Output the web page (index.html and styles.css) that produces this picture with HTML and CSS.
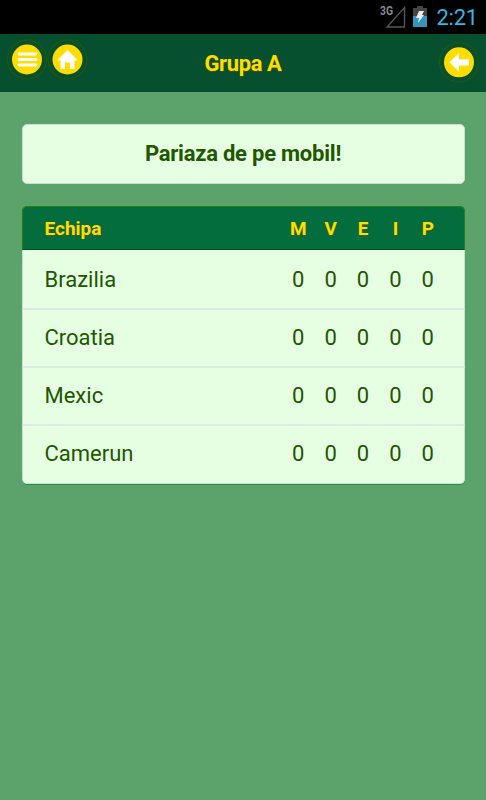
FILE: index.html
```html
<!doctype html>
<html lang="ro">
	<head>
		<meta charset="utf-8" />
		<meta name="viewport" content="width=device-width, initial-scale=1.0" />
		<title>Grupa A</title>
		<link rel="stylesheet" href="styles.css">
	</head>
	<body>
		<div class="status_bar">
			<svg class="signal" width="28" height="24" viewBox="0 0 28 24">
				<text class="signal_label" x="0" y="10" textLength="13" lengthAdjust="spacingAndGlyphs">3G</text>
				<path d="M24.500 2.500V22H7z" fill="none" stroke="#555" stroke-width="1.4" />
			</svg>
			<svg class="battery" width="14" height="21" viewBox="0 0 14 21">
				<path d="M0 2h4V0h6v2h4v8H0z" fill="#444" />
				<path d="M0 10h14v11H0z" fill="#3595bd" />
				<path d="M6 5h5L9 9h2l-6 8 1-5H3z" fill="#eee" />
			</svg>
			<span class="clock">2:21</span>
		</div>
		<header class="header">
			<a class="button" href="#">
				<svg width="42" height="42" viewBox="0 -0.5 42 42">
					<circle class="ring" cx="21" cy="21" r="19.5" />
					<circle class="disc" cx="21" cy="21" r="15" />
					<path class="bars" d="M13 15.5h17M13 21h17M13 26.5h17" />
				</svg>
			</a>
			<a class="button" href="#">
				<svg width="42" height="42" viewBox="0.5 -0.5 42 42">
					<circle class="ring" cx="21" cy="21" r="19.5" />
					<circle class="disc" cx="21" cy="21" r="15" />
					<path class="glyph" d="M21 11.500L30.500 21v1H28v8.500h-4.500V24h-5v6.500H14V22h-2.500v-1z" />
				</svg>
			</a>
			<h1 class="title">Grupa A</h1>
			<a class="button back" href="#">
				<svg width="42" height="42" viewBox="0 -0.3 42 42">
					<circle class="ring" cx="21" cy="21" r="19.5" />
					<circle class="disc" cx="21" cy="21" r="15" />
					<path class="glyph" d="M11.500 21L21 11.700V18h10v6.300H21v6z" />
				</svg>
			</a>
		</header>
		<article class="content">
			<a class="banner" href="#">Pariaza de pe mobil!</a>
			<section class="group">
				<div class="row head">
					<span class="team">Echipa</span>
					<span>M</span><span>V</span><span>E</span><span>I</span><span>P</span>
				</div>
				<div class="row">
					<span class="team">Brazilia</span>
					<span>0</span><span>0</span><span>0</span><span>0</span><span>0</span>
				</div>
				<div class="row">
					<span class="team">Croatia</span>
					<span>0</span><span>0</span><span>0</span><span>0</span><span>0</span>
				</div>
				<div class="row">
					<span class="team">Mexic</span>
					<span>0</span><span>0</span><span>0</span><span>0</span><span>0</span>
				</div>
				<div class="row">
					<span class="team">Camerun</span>
					<span>0</span><span>0</span><span>0</span><span>0</span><span>0</span>
				</div>
			</section>
		</article>
	</body>
</html>
```
FILE: styles.css
```css
* {
	box-sizing : border-box;
}
body {
	margin : 0;
	min-height : 800px;
	background-color : #5ba26b;
	color : #215700;
	font-family : Roboto, sans-serif;
}
.status_bar {
	display : flex;
	justify-content : flex-end;
	height : 34px;
	padding : 5px 8px 0 0;
	background-color : #000;
}
.signal {
	margin-right : 5px;
}
.signal_label {
	fill : #888;
	font-size : 12px;
	font-weight : 700;
}
.battery {
	margin : 1px 9px 0 0;
}
.clock {
	color : #33b5e5;
	font-size : 22px;
	letter-spacing : -0.2px;
	line-height : 26px;
}
.header {
	display : flex;
	height : 58px;
	padding : 4px 6px 0;
	background-color : #07502f;
}
.button {
	width : 41px;
	height : 42px;
}
.button svg {
	display : block;
}
.back {
	width : 42px;
	margin-top : 3px;
}
.ring {
	fill : none;
	stroke : #1d580f;
	stroke-width : 1.3;
}
.disc {
	fill : #ffdd00;
}
.glyph {
	fill : #fff;
}
.bars {
	stroke : #fff;
	stroke-width : 2.8;
	stroke-linecap : round;
}
.title {
	flex : 1;
	margin : 0;
	padding-right : 40px;
	color : #ffdd00;
	font-size : 22px;
	letter-spacing : -0.4px;
	line-height : 51px;
	text-align : center;
	text-shadow : 0 1px 1px #3d5200;
}
.content {
	padding : 32px 21.5px;
}
.banner {
	display : block;
	height : 60px;
	border : 1px solid #c9dfd0;
	border-radius : 5px;
	background-color : #e6ffe3;
	color : #215700;
	font-size : 22px;
	font-weight : 700;
	letter-spacing : -0.23px;
	line-height : 58px;
	text-align : center;
	text-decoration : none;
}
.group {
	margin-top : 22px;
	border-radius : 5px;
	box-shadow : 0 1px 0 #239050;
}
.row {
	display : grid;
	grid-template-columns : 1fr repeat(5, 32.4px);
	align-items : center;
	height : 58px;
	padding : 0 19.5px 2px 22px;
	border : 1px solid #c9dfd0;
	border-top : 0;
	border-bottom : 2px solid #dcebe3;
	background-color : #e6ffe3;
	font-size : 22px;
	text-align : center;
}
.row:last-child {
	padding-bottom : 3px;
	border-bottom : 1px solid #c9dfd0;
	border-radius : 0 0 5px 5px;
}
.team {
	text-align : left;
}
.head {
	height : 44px;
	padding-top : 1px;
	padding-bottom : 0;
	border : 1px solid #258018;
	border-bottom : 1px solid #00561b;
	border-radius : 5px 5px 0 0;
	background-color : #046d3e;
	color : #ffdd00;
	font-size : 19px;
	font-weight : 700;
	text-shadow : 0 1px 1px #4d5a00;
}
.head + .row {
	height : 60px;
	padding-bottom : 0;
}
```
